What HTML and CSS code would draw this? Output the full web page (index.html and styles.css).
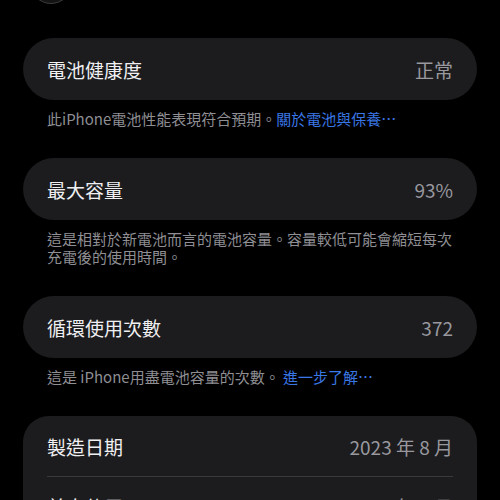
FILE: index.html
```html
<!DOCTYPE html>
<html lang="zh-Hant">
<head>
  <meta charset="UTF-8" />
  <meta name="viewport" content="width=device-width, initial-scale=1.0"/>
  <title>電池健康度</title>
  <link rel="stylesheet" href="styles.css">
</head>
<body>

  <div class="nav">
    <span class="back"></span>
  </div>

  <section class="group">
    <div class="card">
      <div class="row"><span class="label">電池健康度</span><span class="value">正常</span></div>
    </div>
    <p class="note">此iPhone電池性能表現符合預期。<span class="link">關於電池與保養…</span></p>
  </section>

  <section class="group">
    <div class="card">
      <div class="row"><span class="label">最大容量</span><span class="value">93%</span></div>
    </div>
    <p class="note">這是相對於新電池而言的電池容量。容量較低可能會縮短每次充電後的使用時間。</p>
  </section>

  <section class="group">
    <div class="card">
      <div class="row"><span class="label">循環使用次數</span><span class="value">372</span></div>
    </div>
    <p class="note">這是 iPhone用盡電池容量的次數。 <span class="link">進一步了解…</span></p>
  </section>

  <section class="group">
    <div class="card list">
      <div class="row"><span class="label">製造日期</span><span class="value">2023 年 8 月</span></div>
      <div class="row"><span class="label">首次使用</span><span class="value">2023 年 9 月</span></div>
    </div>
  </section>

</body>
</html>
```

FILE: styles.css
```css
* {
  box-sizing: border-box;
}
html, body {
  margin: 0;
  padding: 0;
  background-color: #000;
  font-family: "Noto Sans CJK TC", "Noto Sans", sans-serif;
  overflow: hidden;
}
body {
  padding: 0 23px;
}
.nav {
  display: flex;
  align-items: flex-start;
  height: 38px;
}
.back {
  display: block;
  width: 42px;
  height: 42px;
  margin: -38px 0 0 7px;
  border-radius: 50%;
  background-color: #141415;
  border: 1px solid #3a3a3c;
}
.group {
  margin-bottom: 30px;
}
.card {
  background-color: #1c1c1e;
  border-radius: 31px;
  padding: 0 24px;
}
.card.list {
  border-radius: 26px;
}
.row {
  height: 62px;
  display: flex;
  align-items: center;
  justify-content: space-between;
  font-size: 19px;
}
.list .row {
  height: 60px;
}
.list .row + .row {
  border-top: 1px solid #3a3a3c;
}
.label {
  color: #f0f0f2;
}
.value {
  color: #98989e;
}
.note {
  margin: 10px 24px 0;
  font-size: 15px;
  line-height: 18px;
  color: #8e8e93;
}
.link {
  color: #3a77e6;
}
```
